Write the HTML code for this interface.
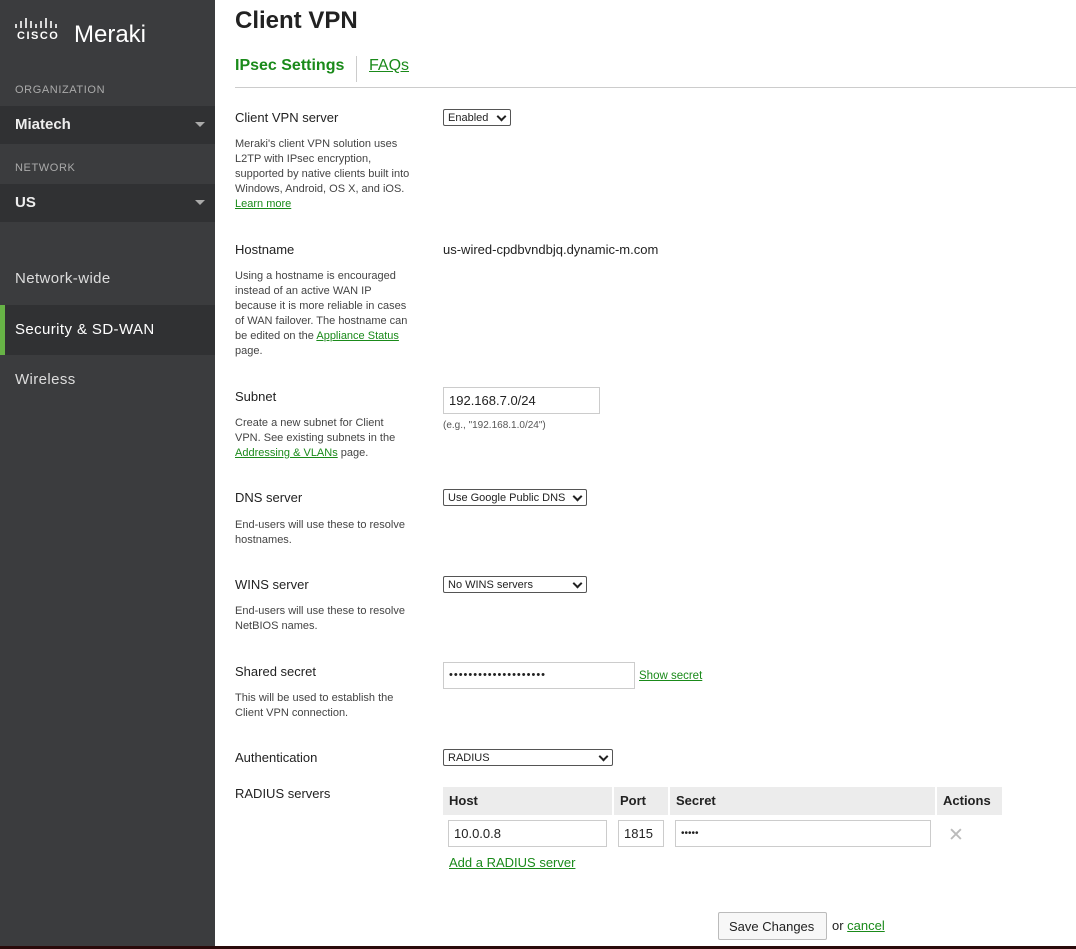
<!DOCTYPE html>
<html><head><style>
*{margin:0;padding:0;box-sizing:border-box}
body{width:1076px;height:949px;position:relative;overflow:hidden;background:#fff;font-family:"Liberation Sans",sans-serif;color:#222}
.a{position:absolute;white-space:nowrap}
#side{position:absolute;left:0;top:0;width:215px;height:949px;background:#3b3c3e}
.hd{color:#aaa;font-size:11px;letter-spacing:.6px}
.dd{position:absolute;left:0;width:215px;height:38px;background:#303133;color:#eee;font-size:15px;font-weight:bold;padding:10px 15px}
.dd:after{content:"";position:absolute;right:10px;top:16px;border:5px solid transparent;border-top:5px solid #aaa}
.nav{color:#ddd;font-size:15px;letter-spacing:.4px}
.lbl{font-size:13px;color:#222}
.desc{font-size:11px;color:#444;line-height:15px;white-space:normal;width:175px}
a,.lk{color:#1a8a1a;text-decoration:underline}
.sel{position:absolute;border:1px solid #555;border-radius:2px;height:17px;font-size:11px;padding:2px 4px 0;background:#fff;line-height:12px}
.sel:after{content:"";position:absolute;right:5px;top:3px;width:5px;height:5px;border-right:2px solid #222;border-bottom:2px solid #222;transform:rotate(45deg)}
.inp{position:absolute;border:1px solid #ccc;height:27px;font-size:13px;padding:5px 5px;background:#fff}
.th{position:absolute;top:787px;height:28px;background:#ececec;font-size:13px;font-weight:bold;padding:6px 6px}
</style></head><body>
<div id="side">
<svg class="a" style="left:15px;top:18px" width="46" height="11"><g stroke="#fff" stroke-width="1.6"><path d="M1 6v4M6 3v7M11 0v10M16 3v7M21 6v4M26 3v7M31 0v10M36 3v7M41 6v4"/></g></svg>
<div class="a" style="left:17px;top:30px;color:#fff;font-size:11px;font-weight:bold;letter-spacing:1.5px">CISCO</div>
<div class="a" style="left:74px;top:21px;color:#fff;font-size:24px;font-weight:300">Meraki</div>
<div class="a hd" style="left:15px;top:84px">ORGANIZATION</div>
<div class="dd" style="top:106px">Miatech</div>
<div class="a hd" style="left:15px;top:162px">NETWORK</div>
<div class="dd" style="top:184px">US</div>
<div class="a nav" style="left:15px;top:270px">Network-wide</div>
<div style="position:absolute;left:0;top:305px;width:215px;height:50px;background:#303133;border-left:5px solid #67b346"></div>
<div class="a nav" style="left:15px;top:321px;color:#fff">Security &amp; SD-WAN</div>
<div class="a nav" style="left:15px;top:371px">Wireless</div>
</div>
<div class="a" style="left:235px;top:7px;font-size:24px;font-weight:bold;color:#222">Client VPN</div>
<div class="a" style="left:235px;top:57px;font-size:16px;font-weight:bold;color:#1a8a1a">IPsec Settings</div>
<div style="position:absolute;left:356px;top:56px;width:1px;height:26px;background:#ccc"></div>
<div class="a lk" style="left:369px;top:57px;font-size:16px">FAQs</div>
<div style="position:absolute;left:235px;top:87px;width:841px;height:1px;background:#ccc"></div>

<div class="a lbl" style="left:235px;top:110px">Client VPN server</div>
<div class="a desc" style="left:235px;top:137px">Meraki's client VPN solution uses L2TP with IPsec encryption, supported by native clients built into Windows, Android, OS X, and iOS. <a>Learn more</a></div>
<div class="sel" style="left:443px;top:109px;width:68px">Enabled</div>

<div class="a lbl" style="left:235px;top:242px">Hostname</div>
<div class="a desc" style="left:235px;top:269px">Using a hostname is encouraged instead of an active WAN IP because it is more reliable in cases of WAN failover. The hostname can be edited on the <a>Appliance Status</a> page.</div>
<div class="a" style="left:443px;top:242px;font-size:13px">us-wired-cpdbvndbjq.dynamic-m.com</div>

<div class="a lbl" style="left:235px;top:389px">Subnet</div>
<div class="a desc" style="left:235px;top:416px">Create a new subnet for Client VPN. See existing subnets in the <a>Addressing &amp; VLANs</a> page.</div>
<div class="inp" style="left:443px;top:387px;width:157px">192.168.7.0/24</div>
<div class="a" style="left:443px;top:420px;font-size:10px;color:#555">(e.g., "192.168.1.0/24")</div>

<div class="a lbl" style="left:235px;top:490px">DNS server</div>
<div class="a desc" style="left:235px;top:518px">End-users will use these to resolve hostnames.</div>
<div class="sel" style="left:443px;top:489px;width:144px">Use Google Public DNS</div>

<div class="a lbl" style="left:235px;top:577px">WINS server</div>
<div class="a desc" style="left:235px;top:604px">End-users will use these to resolve NetBIOS names.</div>
<div class="sel" style="left:443px;top:576px;width:144px">No WINS servers</div>

<div class="a lbl" style="left:235px;top:664px">Shared secret</div>
<div class="a desc" style="left:235px;top:691px">This will be used to establish the Client VPN connection.</div>
<div class="inp" style="left:443px;top:662px;width:192px;letter-spacing:1px;font-size:11px;padding-top:6px">••••••••••••••••••••</div>
<div class="a lk" style="left:639px;top:670px;font-size:11.5px">Show secret</div>

<div class="a lbl" style="left:235px;top:750px">Authentication</div>
<div class="sel" style="left:443px;top:749px;width:170px">RADIUS</div>
<div class="a lbl" style="left:235px;top:786px">RADIUS servers</div>

<div class="th" style="left:443px;width:169px">Host</div>
<div class="th" style="left:614px;width:54px">Port</div>
<div class="th" style="left:670px;width:265px">Secret</div>
<div class="th" style="left:937px;width:65px">Actions</div>
<div class="inp" style="left:448px;top:820px;width:159px">10.0.0.8</div>
<div class="inp" style="left:618px;top:820px;width:46px">1815</div>
<div class="inp" style="left:675px;top:820px;width:256px;font-size:10px;padding-top:7px">•••••</div>
<div class="a" style="left:948px;top:824px;font-size:19px;color:#bbb">✕</div>
<div class="a lk" style="left:449px;top:855px;font-size:13px">Add a RADIUS server</div>

<div style="position:absolute;left:718px;top:912px;width:109px;height:28px;border:1px solid #bbb;border-radius:2px;background:#f7f7f7;font-size:13px;padding:6px 10px;white-space:nowrap">Save Changes</div>
<div class="a" style="left:832px;top:918px;font-size:13px">or <a>cancel</a></div>
<div style="position:absolute;left:0;top:946px;width:1076px;height:3px;background:#2a0a0a"></div>
</body></html>
